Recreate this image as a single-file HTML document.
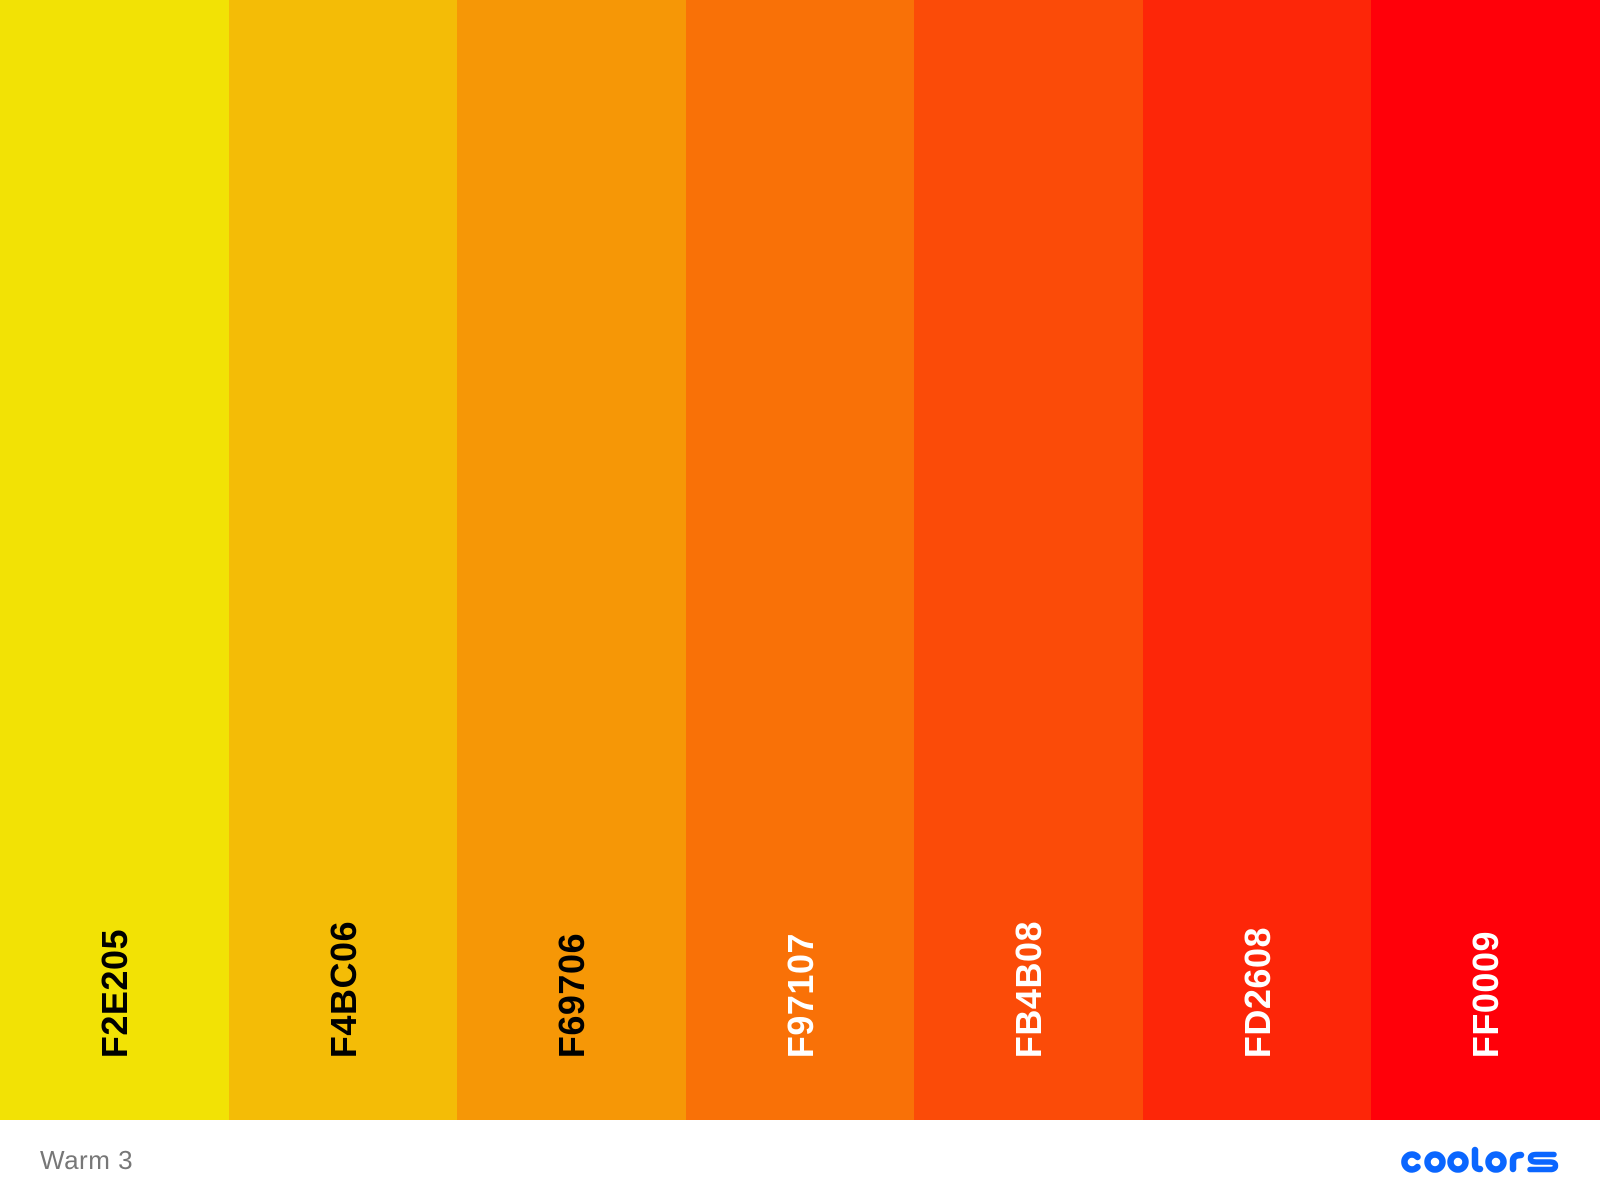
<!DOCTYPE html>
<html><head><meta charset="utf-8"><style>
html,body{margin:0;padding:0;width:1600px;height:1200px;background:#fff;overflow:hidden;font-family:"Liberation Sans",Arial,sans-serif}
.c{position:absolute;top:0;height:1120px;width:229px}
.t{position:absolute;bottom:62px;left:0;width:229px;display:flex;justify-content:center}
.t span{writing-mode:vertical-rl;transform:rotate(180deg);font-weight:bold;font-size:36px;letter-spacing:0.5px;line-height:1}
.name{position:absolute;left:40px;top:1145px;font-size:26px;color:#777;letter-spacing:0.5px}
</style></head><body>
<div class="c" style="left:0;background:#F2E205"><div class="t"><span style="color:#000">F2E205</span></div></div>
<div class="c" style="left:229px;background:#F4BC06"><div class="t"><span style="color:#000">F4BC06</span></div></div>
<div class="c" style="left:457px;background:#F69706"><div class="t"><span style="color:#000">F69706</span></div></div>
<div class="c" style="left:686px;background:#F97107"><div class="t"><span style="color:#fff">F97107</span></div></div>
<div class="c" style="left:914px;background:#FB4B08"><div class="t"><span style="color:#fff">FB4B08</span></div></div>
<div class="c" style="left:1143px;background:#FD2608"><div class="t"><span style="color:#fff">FD2608</span></div></div>
<div class="c" style="left:1371px;width:229px;background:#FF0009"><div class="t"><span style="color:#fff">FF0009</span></div></div>
<div class="name">Warm 3</div>
<svg style="position:absolute;left:1400px;top:1145px" width="160" height="28" viewBox="0 0 160 28" fill="none" stroke="#0a66ff" stroke-width="6.5" stroke-linecap="round">
<path d="M17.5,12 A7.5,7.5 0 1 0 17.5,22"/>
<circle cx="35" cy="17" r="7.5"/>
<circle cx="58" cy="17" r="7.5"/>
<path d="M75,5 V19 Q75,24 80,24"/>
<circle cx="96" cy="17" r="7.5"/>
<path d="M113,24 V16 Q113,10 121,10"/>
<path stroke-width="5.5" d="M154,9.5 H136 Q130.5,9.5 130.5,13.3 Q130.5,17 136,17 H150 Q155.5,17 155.5,20.7 Q155.5,24.5 150,24.5 H130"/>
</svg>
</body></html>
